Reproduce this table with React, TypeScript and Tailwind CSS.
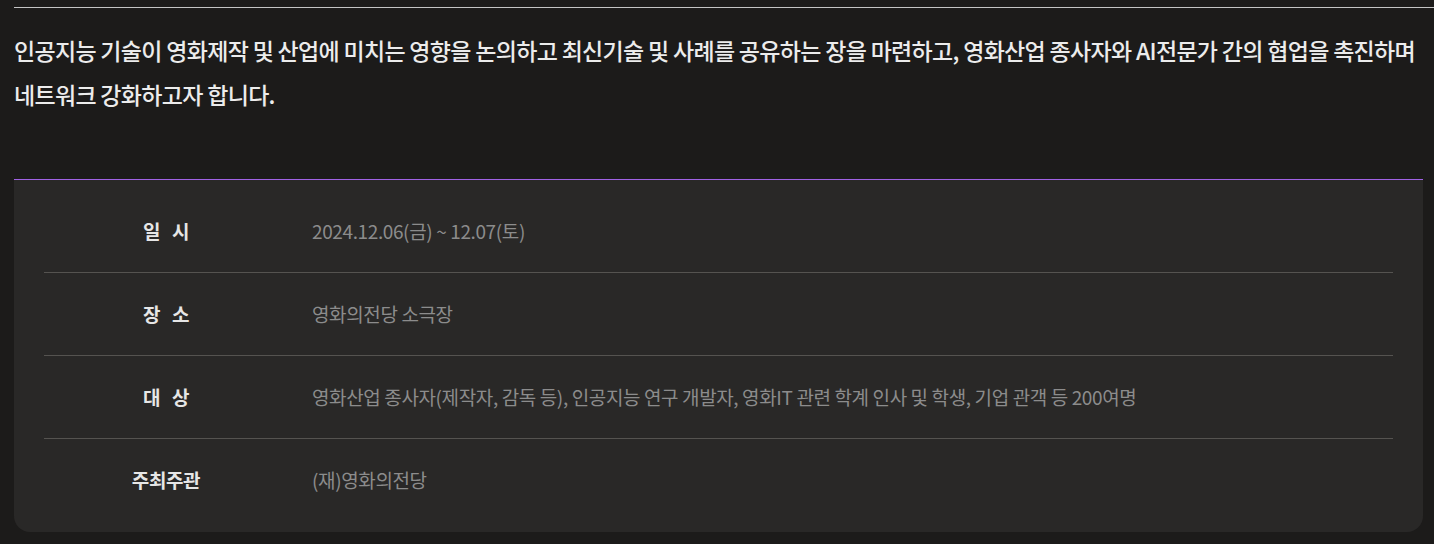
import React from "react";

const rows: { label: string[]; value: string }[] = [
  { label: ["일", "시"], value: "2024.12.06(금) ~ 12.07(토)" },
  { label: ["장", "소"], value: "영화의전당 소극장" },
  { label: ["대", "상"], value: "영화산업 종사자(제작자, 감독 등), 인공지능 연구 개발자, 영화IT 관련 학계 인사 및 학생, 기업 관객 등 200여명" },
  { label: ["주최주관"], value: "(재)영화의전당" },
];

export default function App() {
  return (
    <div
      className="w-[1434px] h-[544px] bg-[#1c1b1a] pt-[7px] pl-[14px] overflow-hidden"
      style={{ fontFamily: '"Noto Sans CJK KR", "Noto Sans", sans-serif' }}
    >
      <div className="h-px bg-[#c4c4c4]" />
      <p className="mt-[20px] text-[23px] leading-[44px] tracking-[-0.03em] text-[#ececec] font-medium break-keep">
        인공지능 기술이 영화제작 및 산업에 미치는 영향을 논의하고 최신기술 및 사례를 공유하는 장을 마련하고, 영화산업 종사자와 AI전문가 간의 협업을 촉진하며 네트워크 강화하고자 합니다.
      </p>
      <div className="mt-[63px] w-[1409px] bg-[#292827] border-t border-[#a062e4] rounded-b-[16px] px-[30px] pt-[10px] pb-[10px]">
        {rows.map((r, i) => (
          <div
            key={r.label.join("")}
            className={`flex items-center h-[83px] ${i < rows.length - 1 ? "border-b border-[#555350]" : ""}`}
          >
            <div className="w-[244px] flex justify-center gap-[12px] text-[19px] font-bold text-[#e6e6e6] tracking-[-0.02em]">
              {r.label.map((l) => (
                <span key={l}>{l}</span>
              ))}
            </div>
            <div className="pl-[24px] text-[19px] text-[#8c8c8c] tracking-[-0.02em]">{r.value}</div>
          </div>
        ))}
      </div>
    </div>
  );
}
